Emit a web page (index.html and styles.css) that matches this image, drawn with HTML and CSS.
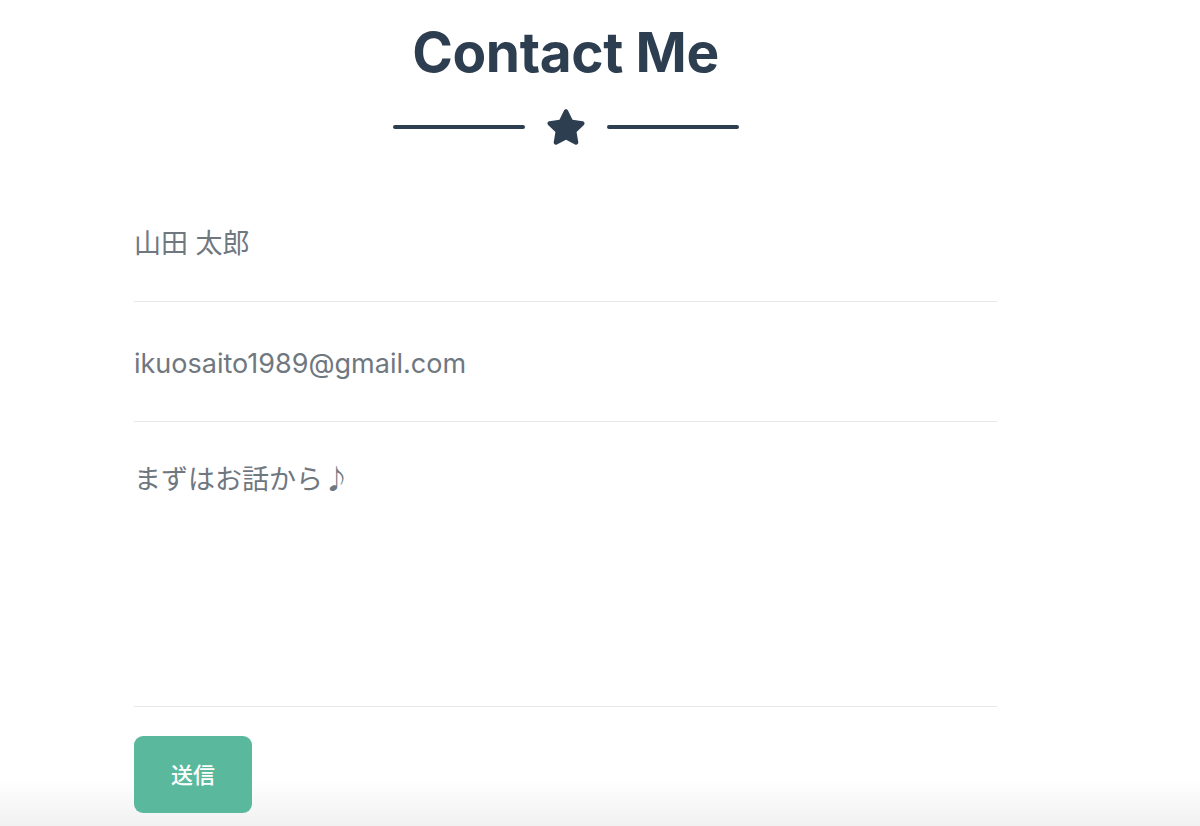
FILE: index.html
```html
<!DOCTYPE html>
<html lang="ja">
<head>
<meta charset="utf-8">
<title>Contact Me</title>
<link rel="stylesheet" href="styles.css">
</head>
<body>
<section class="contact">
  <div class="container">
    <h2 class="title">Contact Me</h2>
    <div class="divider">
      <span class="divider-line"></span>
      <svg class="divider-star" viewBox="0 0 576 512" aria-hidden="true"><path d="M259.3 17.8L194 150.2 47.9 171.5c-26.2 3.8-36.7 36.1-17.7 54.6l105.7 103-25 145.5c-4.5 26.3 23.2 46 46.4 33.7L288 439.6l130.7 68.7c23.2 12.2 50.9-7.4 46.4-33.7l-25-145.5 105.7-103c19-18.5 8.5-50.8-17.7-54.6L382 150.2 316.7 17.8c-11.7-23.6-45.6-23.9-57.4 0z"/></svg>
      <span class="divider-line"></span>
    </div>
    <form class="form">
      <div class="field">
        <input class="control" type="text" value="山田 太郎">
      </div>
      <div class="field">
        <input class="control" type="email" value="ikuosaito1989@gmail.com">
      </div>
      <div class="field field-message">
        <textarea class="control control-area">まずはお話から♪</textarea>
      </div>
      <button class="btn-send" type="button">送信</button>
    </form>
  </div>
</section>
</body>
</html>
```
FILE: styles.css
```css
html {
  margin: 0;
  padding: 0;
  min-height: 100%;
  background: #ffffff linear-gradient(to bottom, #ffffff 0%, #f1f1f1 100%) no-repeat left bottom / 100% 48px;
}

body {
  margin: 0;
  padding: 0;
  font-family: Inter, "Noto Sans CJK JP", sans-serif;
  color: #2c3e50;
}

.contact {
  padding-top: 17px;
}

.container {
  width: 863px;
  margin-left: 134px;
}

.title {
  margin: 0;
  text-align: center;
  font-size: 55px;
  font-weight: 700;
  line-height: 70px;
  letter-spacing: -0.4px;
  color: #2c3e50;
}

.divider {
  display: flex;
  align-items: center;
  justify-content: center;
  gap: 21px;
  margin-top: 20px;
  height: 40px;
}

.divider-line {
  width: 132px;
  height: 4px;
  border-radius: 2px;
  background: #2c3e50;
}

.divider-star {
  width: 40px;
  height: 36px;
  fill: #2c3e50;
}

.form {
  margin-top: 35px;
}

.field {
  height: 120px;
  box-sizing: border-box;
  padding-top: 44px;
  border-bottom: 1px solid #e6e8ea;
}

.field-message {
  height: 285px;
  padding-top: 40px;
}

.control {
  display: block;
  width: 100%;
  padding: 0;
  margin: 0;
  border: 0;
  outline: none;
  background: transparent;
  font-family: Inter, "Noto Sans CJK JP", sans-serif;
  font-size: 27px;
  line-height: 36px;
  color: #6f777f;
}

.control-area {
  height: 200px;
  resize: none;
}

.btn-send {
  display: block;
  margin-top: 29px;
  width: 118px;
  height: 77px;
  padding: 0 0 4px;
  border: 0;
  border-radius: 9px;
  background: #5ab99d;
  color: #ffffff;
  font-family: "Noto Sans CJK JP", sans-serif;
  font-size: 22px;
  font-weight: 500;
  cursor: pointer;
}
```
